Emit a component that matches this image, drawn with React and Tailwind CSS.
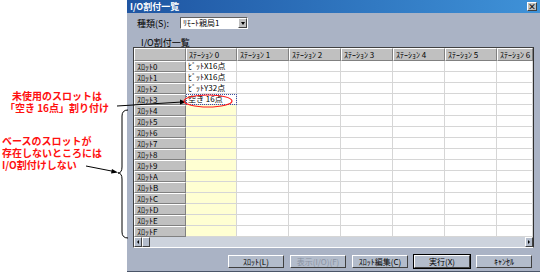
import React from 'react';

const stations = ['ｽﾃｰｼｮﾝ 0', 'ｽﾃｰｼｮﾝ 1', 'ｽﾃｰｼｮﾝ 2', 'ｽﾃｰｼｮﾝ 3', 'ｽﾃｰｼｮﾝ 4', 'ｽﾃｰｼｮﾝ 5', 'ｽﾃｰｼｮﾝ 6'];
const slots = ['0', '1', '2', '3', '4', '5', '6', '7', '8', '9', 'A', 'B', 'C', 'D', 'E', 'F'];
const assigned = { 0: 'ﾋﾞｯﾄX16点', 1: 'ﾋﾞｯﾄX16点', 2: 'ﾋﾞｯﾄY32点', 3: '空き 16点' };

const hdr = 'bg-[#c0c0c0] border-t border-l border-t-white border-l-white border-r border-b border-r-[#808080] border-b-[#808080] overflow-hidden whitespace-nowrap';

function Btn({ children, disabled, primary }) {
    return (
        <div className={`w-[56px] h-[13px] ${primary ? 'outline outline-1 outline-black' : ''} border border-t-white border-l-white border-r-[#404040] border-b-[#404040] bg-[#b3bccb] flex items-center justify-center text-[8px] leading-[11px] whitespace-nowrap ${disabled ? 'text-[#8a93a3]' : 'text-black'}`}>
            {children}
        </div>
    );
}

export default function App() {
    return (
        <div className="relative w-[540px] h-[275px] bg-white flex overflow-hidden font-['Noto_Sans_CJK_JP',sans-serif]">
            {/* annotations on the left */}
            <div className="w-[127px] shrink-0 flex flex-col text-[#ff1010] font-bold text-[10px] leading-[12px] whitespace-nowrap">
                <div className="mt-[90px] w-[114px] flex flex-col items-center">
                    <div>未使用のスロットは</div>
                    <div>「空き 16点」割り付け</div>
                </div>
                <div className="mt-[21px] pl-[2px]">
                    <div>ベースのスロットが</div>
                    <div>存在しないところには</div>
                    <div>I/O割付けしない</div>
                </div>
            </div>

            {/* dialog */}
            <div className="w-[413px] h-[272px] shrink-0 bg-[#aab3c5] border-b border-b-[#4a5568] flex flex-col">
                <div className="h-[13px] bg-gradient-to-r from-[#1f55a2] to-[#3f92d8] flex items-center pl-[3px] pr-[3px]">
                    <span className="text-white font-bold text-[9px] leading-[11px]">I/O割付一覧</span>
                    <div className="ml-auto w-[10px] h-[9px] bg-[#c0c0c0] border border-t-white border-l-white border-r-[#404040] border-b-[#404040] flex items-center justify-center text-[8px] leading-[7px] font-bold text-black">×</div>
                </div>

                <div className="flex items-center mt-[4px] h-[12px]">
                    <span className="ml-[10px] w-[43px] text-[9px] leading-[11px] text-black">種類(S):</span>
                    <div className="w-[68px] h-[12px] bg-white border border-t-[#606060] border-l-[#606060] border-r-white border-b-white flex items-center">
                        <span className="pl-[2px] text-[8px] leading-[10px] text-black flex-1">ﾘﾓｰﾄ親局1</span>
                        <div className="w-[9px] h-[10px] bg-[#c0c0c0] border border-t-white border-l-white border-r-[#404040] border-b-[#404040] flex items-center justify-center">
                            <div className="w-0 h-0 border-l-[2.5px] border-r-[2.5px] border-t-[3px] border-l-transparent border-r-transparent border-t-black" />
                        </div>
                    </div>
                </div>

                <div className="ml-[14px] mt-[8px] h-[11px] text-[9px] leading-[11px] text-black">I/O割付一覧</div>

                <div className="ml-[6px] mt-[-1px] w-[401px] border border-t-[#404040] border-l-[#404040] border-r-[#303030] border-b-white bg-white">
                    <div className="grid grid-cols-[52px_51px_52px_52px_52px_52px_52px_36px] text-[8px] text-black">
                        <div className={`${hdr} h-[13px]`} />
                        {stations.map((s) => (
                            <div key={s} className={`${hdr} h-[13px] pl-[2px] leading-[11px]`}>{s}</div>
                        ))}
                        {slots.map((sl, r) => (
                            <React.Fragment key={sl}>
                                <div className={`${hdr} h-[11px] pl-[2px] leading-[9px]`}>ｽﾛｯﾄ{sl}</div>
                                {stations.map((s, c) => {
                                    const text = c === 0 ? assigned[r] : null;
                                    const yellow = c === 0 && r > 3;
                                    const focus = c === 0 && r === 3;
                                    return (
                                        <div
                                            key={s}
                                            className={`h-[11px] border-r border-b border-[#d6d6d6] pl-[2px] leading-[10px] whitespace-nowrap overflow-hidden ${yellow ? 'bg-[#ffffd2]' : 'bg-white'} ${focus ? 'outline outline-1 outline-dotted outline-[#4050a0] -outline-offset-1' : ''}`}
                                        >
                                            {text}
                                        </div>
                                    );
                                })}
                            </React.Fragment>
                        ))}
                    </div>
                    <div className="h-[10px] bg-[#cdd3dd] flex">
                        <div className="w-[8px] bg-[#b3bccb] border border-t-white border-l-white border-r-[#404040] border-b-[#404040] flex items-center justify-center">
                            <div className="w-0 h-0 border-t-[2px] border-b-[2px] border-r-[2px] border-t-transparent border-b-transparent border-r-black" />
                        </div>
                        <div className="w-[8px] bg-[#b3bccb] border border-t-white border-l-white border-r-[#404040] border-b-[#404040]" />
                        <div className="flex-1" />
                        <div className="w-[8px] bg-[#b3bccb] border border-t-white border-l-white border-r-[#404040] border-b-[#404040] flex items-center justify-center">
                            <div className="w-0 h-0 border-t-[2px] border-b-[2px] border-l-[2px] border-t-transparent border-b-transparent border-l-black" />
                        </div>
                    </div>
                </div>

                <div className="flex justify-end gap-[6px] pr-[8px] mt-[7px]">
                    <Btn>ｽﾛｯﾄ(L)</Btn>
                    <Btn disabled>表示(I/O)(F)</Btn>
                    <Btn>ｽﾛｯﾄ編集(C)</Btn>
                    <Btn primary>実行(X)</Btn>
                    <Btn>ｷｬﾝｾﾙ</Btn>
                </div>
            </div>

            {/* callout lines drawn over the dialog */}
            <svg className="absolute inset-0 pointer-events-none" width="540" height="275">
                <line x1="117" y1="106" x2="182" y2="102" stroke="#000" strokeWidth="1" />
                <polygon points="186,102 180,99.5 180,104.5" fill="#000" />
                <line x1="86" y1="166" x2="114" y2="171.5" stroke="#000" strokeWidth="1" />
                <polygon points="118,172.5 112,169 111,173.5" fill="#000" />
                <path d="M128 110 Q122 110 122 116 L122 167 Q122 173 118 173 Q122 173 122 179 L122 232 Q122 238 128 238" fill="none" stroke="#000" strokeWidth="1" />
                <ellipse cx="208" cy="101" rx="24" ry="6" fill="none" stroke="#ff1a1a" strokeWidth="1.2" />
            </svg>
        </div>
    );
}
